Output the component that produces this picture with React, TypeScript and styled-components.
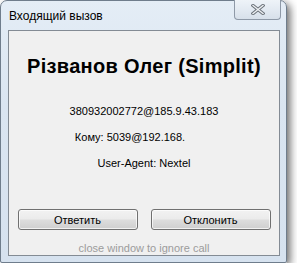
import React from 'react';
import styled, {createGlobalStyle} from 'styled-components';

const GlobalStyle = createGlobalStyle`
    html, body {
        margin: 0;
        padding: 0;
        background: #ffffff;
    }
`

const Window = styled.div`
    box-sizing: border-box;
    width: 287px;
    height: 263px;
    border: 1px solid #6f7d8c;
    border-radius: 7px 7px 2px 2px;
    background: linear-gradient(180deg, #e4edf6 0%, #dae5f1 40%, #d6e2ef 100%);
    box-shadow: 3px 3px 8px rgba(0, 0, 0, 0.6);
    padding: 0 6px 6px 7px;
    display: flex;
    flex-direction: column;
`

const TitleBar = styled.div`
    height: 29px;
    display: flex;
    align-items: flex-start;
    justify-content: space-between;
`

const Title = styled.span`
    font-family: "Liberation Sans", Arial, sans-serif;
    font-size: 12px;
    color: #000;
    margin-top: 8px;
    margin-left: 1px;
`

const CloseButton = styled.div`
    box-sizing: border-box;
    width: 47px;
    height: 20px;
    margin-right: -1px;
    margin-top: -1px;
    border: 1px solid #8e99a7;
    border-top: none;
    border-radius: 0 0 4px 4px;
    background: linear-gradient(180deg, #eef3f8 0%, #e3eaf2 50%, #d7e0ea 100%);
    display: flex;
    align-items: center;
    justify-content: center;
`

const Client = styled.div`
    box-sizing: border-box;
    flex: 1;
    border: 1px solid #838b94;
    background: #f0f0f0;
    display: flex;
    flex-direction: column;
    align-items: center;
    font-family: "Liberation Sans", Tahoma, sans-serif;
    font-size: 11px;
    color: #000;
`

const CallerName = styled.div`
    margin-top: 23px;
    font-size: 20px;
    line-height: 24px;
    font-weight: bold;
    letter-spacing: 0.3px;
`

const InfoLine = styled.div<{$gap: number; $shift?: number}>`
    margin-top: ${p => p.$gap}px;
    margin-right: ${p => (p.$shift || 0) * 2}px;
    line-height: 14px;
`

const ButtonRow = styled.div`
    margin-top: 39px;
    display: flex;
    gap: 13px;
`

const Button = styled.button`
    box-sizing: border-box;
    width: 120px;
    height: 21px;
    padding: 0;
    border: 1px solid #707070;
    border-radius: 3px;
    background: linear-gradient(180deg, #f2f2f2 0%, #ebebeb 48%, #dddddd 52%, #cfcfcf 100%);
    box-shadow: inset 0 0 0 1px rgba(255, 255, 255, 0.7);
    font-family: "Liberation Sans", Tahoma, sans-serif;
    font-size: 11px;
    color: #000;
`

const Hint = styled.div`
    margin-top: 11px;
    line-height: 14px;
    color: #9c9c9c;
`

const CloseIcon = () => (
    <svg width="14" height="11" viewBox="0 0 14 11">
        <path d="M2 1.5 L12 9.5 M12 1.5 L2 9.5" stroke="#6c737b" strokeWidth="3.4" strokeLinecap="square"/>
        <path d="M2 1.5 L12 9.5 M12 1.5 L2 9.5" stroke="#eef1f4" strokeWidth="1.4" strokeLinecap="square"/>
    </svg>
)

export default function App() {
    return (
        <>
            <GlobalStyle/>
            <Window>
                <TitleBar>
                    <Title>Входящий вызов</Title>
                    <CloseButton>
                        <CloseIcon/>
                    </CloseButton>
                </TitleBar>
                <Client>
                    <CallerName>Різванов Олег (Simplit)</CallerName>
                    <InfoLine $gap={26}>380932002772@185.9.43.183</InfoLine>
                    <InfoLine $gap={12} $shift={14}>Кому: 5039@192.168.</InfoLine>
                    <InfoLine $gap={12}>User-Agent: Nextel</InfoLine>
                    <ButtonRow>
                        <Button>Ответить</Button>
                        <Button>Отклонить</Button>
                    </ButtonRow>
                    <Hint>close window to ignore call</Hint>
                </Client>
            </Window>
        </>
    );
}
